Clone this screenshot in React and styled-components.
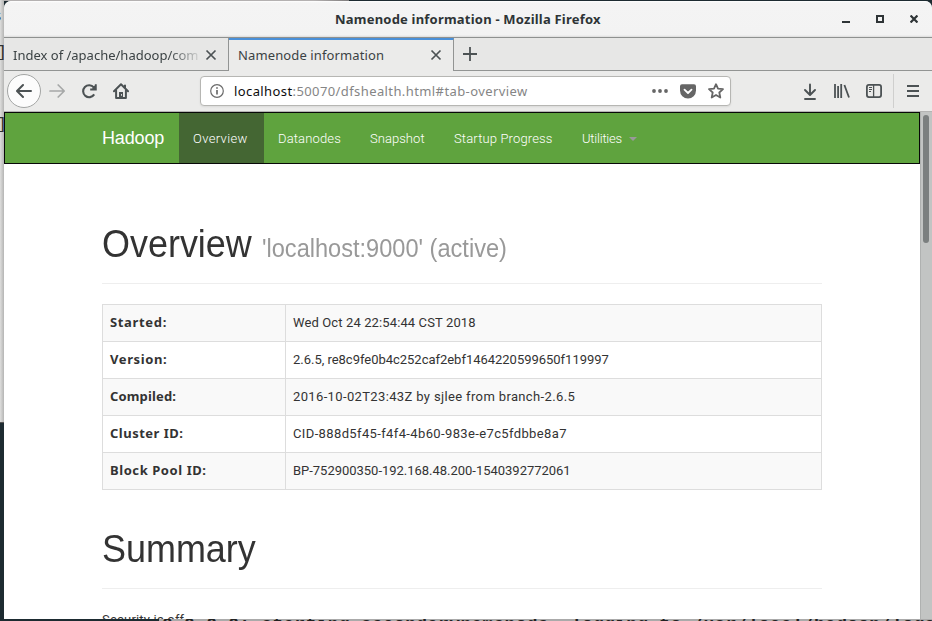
import React from "react";
import styled, { createGlobalStyle } from "styled-components";

const Global = createGlobalStyle`
  *, *::before, *::after { box-sizing: border-box; }
  html, body { margin: 0; padding: 0; overflow: hidden; background: #1d2b31; }
  svg { display: block; flex: none; }
`;

const Desktop = styled.div`
  position: relative;
  width: 932px;
  height: 621px;
  overflow: hidden;
  background: #1d2b31;
`;
const TerminalTop = styled.div`
  position: absolute;
  left: 0;
  top: 0;
  width: 349px;
  height: 1px;
  background: linear-gradient(90deg, #b4b1b1 90%, #7f7c7c);
`;
const TerminalSide = styled.div`
  position: absolute;
  left: 0;
  top: 0;
  width: 4px;
  height: 423px;
  overflow: hidden;
  background: linear-gradient(90deg, #dededd, #b5b5b4);
  border-bottom: 1px solid #555;
`;
const SideGlyph = styled.span`
  position: absolute;
  right: ${(p) => p.$right}px;
  top: ${(p) => p.$top}px;
  font: 17px/20px "Liberation Mono", monospace;
  color: #333;
`;
const TerminalLine = styled.div`
  position: absolute;
  left: 159px;
  top: 619px;
  width: 773px;
  height: 2px;
  overflow: hidden;
  background: #aaa;
`;
const TerminalText = styled.div`
  margin-top: -4px;
  padding-left: 3px;
  white-space: pre;
  font: bold 18px/20px "Liberation Mono", monospace;
  letter-spacing: 0.25px;
  color: #222;
`;

const Window = styled.div`
  position: relative;
  display: flex;
  flex-direction: column;
  width: 928px;
  height: 618px;
  margin: 1px 0 0 4px;
  overflow: hidden;
  border-radius: 7px 7px 0 0;
  background: #ebebea;
`;
const TitleBar = styled.div`
  display: flex;
  align-items: center;
  flex: none;
  height: 37px;
  background: linear-gradient(#fff 0, #f4f4f4 2px, #f3f3f3 34px, #dcdcdb 36px);
  border-bottom: 1px solid #8f9190;
`;
const WindowTitle = styled.div`
  flex: none;
  width: 838px;
  padding-left: 331px;
  font: bold 13px/20px "Noto Sans", sans-serif;
  letter-spacing: 0.21px;
  color: #2e3436;
  white-space: nowrap;
`;
const WindowButtons = styled.div`
  display: flex;
  align-items: center;
  gap: 26px;
`;

const TabStrip = styled.div`
  display: flex;
  flex: none;
  height: 33px;
  background: #e7e7e6;
`;
const Tab = styled.div`
  display: flex;
  align-items: center;
  width: ${(p) => p.$width}px;
  padding: ${(p) => (p.$active ? "0 0 1px 9px" : "1px 0 0 9px")};
  border-right: 1px solid #929493;
  border-top: ${(p) => (p.$active ? "2px solid #4a90d9" : "0")};
  border-bottom: ${(p) => (p.$active ? "0" : "1px solid #929493")};
  background: ${(p) => (p.$active ? "#ebebea" : "#e7e7e6")};
`;
const TabTitle = styled.div`
  width: ${(p) => p.$width}px;
  overflow: hidden;
  font: 13px/20px "Noto Sans", sans-serif;
  letter-spacing: ${(p) => p.$ls || 0}px;
  color: #3b4244;
  white-space: nowrap;
  ${(p) => p.$fade && "mask-image: linear-gradient(90deg, #000 81%, transparent 99%);"}
`;
const TabRest = styled.div`
  display: flex;
  align-items: center;
  flex: 1;
  padding-left: 9px;
  border-bottom: 1px solid #929493;
`;

const Toolbar = styled.div`
  display: flex;
  align-items: center;
  flex: none;
  height: 40px;
  padding-left: 3px;
`;
const BackButton = styled.div`
  display: flex;
  align-items: center;
  justify-content: center;
  width: 34px;
  height: 34px;
  border: 1px solid #a3a5a4;
  border-radius: 50%;
  background: #fcfcfc;
`;
const NavIcons = styled.div`
  display: flex;
  align-items: center;
  gap: 16px;
  width: 159px;
  padding-left: 8px;
`;
const UrlBar = styled.div`
  display: flex;
  align-items: center;
  width: 531px;
  height: 30px;
  padding: 0 6px 0 9px;
  border: 1px solid #b6b6b3;
  border-radius: 4px;
  background: #fff;
  box-shadow: 0 1px 2px rgba(0, 0, 0, 0.08);
`;
const UrlText = styled.div`
  flex: 1;
  padding-left: 10px;
  font: 13px/20px "Noto Sans", sans-serif;
  letter-spacing: 0.4px;
  color: #858585;
  white-space: nowrap;
`;
const UrlHost = styled.span`
  color: #0c0c0d;
  letter-spacing: 0.4px;
`;
const UrlActions = styled.div`
  display: flex;
  align-items: center;
  gap: 12px;
`;
const ToolIcons = styled.div`
  display: flex;
  align-items: center;
  gap: 16px;
  width: 162px;
  padding-left: 73px;
`;
const MenuSlot = styled.div`
  display: flex;
  align-items: center;
  height: 34px;
  padding-left: 13px;
  border-left: 1px solid #cfcfce;
`;

const Viewport = styled.div`
  display: flex;
  flex: 1;
  min-height: 0;
  border-top: 1px solid #b4b4b3;
`;
const Page = styled.main`
  flex: none;
  width: 916px;
  overflow: hidden;
  background: #fff;
  color: #333;
`;
const Scrollbar = styled.div`
  flex: none;
  width: 12px;
  padding: 3px 0 0 2px;
  border-left: 1px solid #afb1b0;
  background: #c2c4c3;
`;
const ScrollThumb = styled.div`
  width: 6px;
  height: 128px;
  border-radius: 3px;
  background: #7b7f7f;
`;

const Navbar = styled.nav`
  display: flex;
  height: 52px;
  padding-left: 97px;
  border: 1px solid #080808;
  background: #5fa33e;
`;
const Brand = styled.div`
  width: 77px;
  font: 18px/51px "Liberation Sans", sans-serif;
  letter-spacing: -0.15px;
  color: #fff;
`;
const NavItem = styled.div`
  display: flex;
  align-items: center;
  width: ${(p) => p.$width}px;
  padding: 2px 0 0 14px;
  font: 300 13px/20px Roboto, sans-serif;
  letter-spacing: ${(p) => p.$ls}px;
  white-space: nowrap;
  color: #fff;
  background: ${(p) => (p.$active ? "#446633" : "transparent")};
`;
const Caret = styled.i`
  margin-left: 7px;
  border: 4px solid transparent;
  border-top-color: #999;
  border-bottom: 0;
`;

const Content = styled.div`
  width: 720px;
  margin-left: 98px;
`;
const Header = styled.header`
  display: flex;
  align-items: baseline;
  height: ${(p) => p.$height}px;
  padding-top: ${(p) => p.$top}px;
  margin-bottom: 20px;
  border-bottom: 1px solid #eee;
`;
const Heading = styled.h1`
  width: 160px;
  margin: 0;
  font: 38px/44px "Liberation Sans", sans-serif;
  transform: scaleX(0.946);
  transform-origin: left;
`;
const SubHeading = styled.small`
  font: 25px/30px "Liberation Sans", sans-serif;
  transform: scaleX(0.943);
  transform-origin: left;
  color: #999;
  white-space: nowrap;
`;
const Table = styled.table`
  width: 720px;
  border-collapse: collapse;
  table-layout: fixed;
`;
const Row = styled.tr`
  height: 37px;
  &:nth-child(odd) { background: #f9f9f9; }
`;
const LabelCell = styled.th`
  width: 183px;
  padding: 0 7px 2px;
  border: 1px solid #ddd;
  text-align: left;
  font: bold 13px/20px "Noto Sans", sans-serif;
  letter-spacing: ${(p) => p.$ls}px;
`;
const ValueCell = styled.td`
  padding: 0 7px;
  border: 1px solid #ddd;
  font: 13px/20px Roboto, sans-serif;
  letter-spacing: ${(p) => p.$ls}px;
`;
const Note = styled.p`
  margin: 0;
  font: 13px/22px Roboto, sans-serif;
  letter-spacing: 0.2px;
`;

const Cross = () => (
  <svg width="12" height="12" viewBox="0 0 12 12" stroke="#4c5254" strokeWidth="1.7" fill="none">
    <path d="M1.5 1.5l9 9M10.5 1.5l-9 9" />
  </svg>
);
const Minimize = () => (
  <svg width="8" height="8" viewBox="0 0 8 8"><path d="M0 6h8v2H0z" fill="#2e3436" /></svg>
);
const Maximize = () => (
  <svg width="8" height="8" viewBox="0 0 8 8"><path d="M1 1h6v6H1z" fill="none" stroke="#2e3436" strokeWidth="2" /></svg>
);
const CloseWindow = () => (
  <svg width="8" height="8" viewBox="0 0 8 8"><path d="M.6.5l6.8 7M7.4.5l-6.8 7" stroke="#2e3436" strokeWidth="2.1" /></svg>
);
const Plus = () => (
  <svg width="14" height="14" viewBox="0 0 14 14"><path d="M7 0v14M0 7h14" stroke="#4c5254" strokeWidth="1.8" /></svg>
);
const Arrow = ({ flip, color }) => (
  <svg width="16" height="16" viewBox="0 0 16 16" fill="none" stroke={color} strokeWidth={flip ? 1.7 : 2} strokeLinecap="round" strokeLinejoin="round">
    {flip ? <path d="M1 8h14M9.2 2l6 6-6 6" /> : <path d="M15 8H1.2M7 2L1 8l6 6" />}
  </svg>
);
const Reload = () => (
  <svg width="16" height="16" viewBox="0 0 16 16" fill="none" stroke="#4c5254" strokeWidth="2.1">
    <path d="M13.2 11.4A6 6 0 1 1 12.8 4.4" />
    <path d="M14.8 1.2v5.3H9.2" strokeWidth="1.9" />
    <path d="M12 3.8l2.8-2v4.7H11z" fill="#4c5254" stroke="none" />
  </svg>
);
const Home = () => (
  <svg width="16" height="16" viewBox="0 0 16 16" fill="none" stroke="#4c5254" strokeWidth="2" strokeLinejoin="round" strokeLinecap="round">
    <path d="M1 8.3L8 1.2l7 7.1M12 2.5v2.5" />
    <path d="M3.1 7.5V15h9.8V7.5" />
    <path d="M6 14.5V9h4v5.5z" fill="#4c5254" stroke="none" />
    <path d="M8.5 11.5v.8" stroke="#ebebea" strokeWidth="1" />
  </svg>
);
const Info = () => (
  <svg width="14" height="14" viewBox="0 0 14 14" fill="none" stroke="#6b6b6b">
    <circle cx="7" cy="7" r="6.3" strokeWidth="1.2" />
    <path d="M7 6v4.5M7 3.2v1.6" strokeWidth="1.7" />
  </svg>
);
const Dots = () => (
  <svg width="16" height="4" viewBox="0 0 16 4" fill="#666"><circle cx="2" cy="2" r="1.9" /><circle cx="8" cy="2" r="1.9" /><circle cx="14" cy="2" r="1.9" /></svg>
);
const Pocket = () => (
  <svg width="16" height="15" viewBox="0 0 16 15">
    <path d="M2 .3h12a2 2 0 0 1 2 2v4.3a8 8 0 0 1-16 0V2.3a2 2 0 0 1 2-2z" fill="#666" />
    <path d="M4.5 5.6L8 9l3.5-3.4" fill="none" stroke="#fff" strokeWidth="1.8" strokeLinecap="round" strokeLinejoin="round" />
  </svg>
);
const Star = () => (
  <svg width="16" height="16" viewBox="0 0 16 16" fill="none" stroke="#666" strokeWidth="1.8" strokeLinejoin="round">
    <path d="M8 1.2l2 4.5 5 .5-3.7 3.3 1 5L8 12l-4.3 2.5 1-5L1 6.2l5-.5z" />
  </svg>
);
const Download = () => (
  <svg width="12" height="17" viewBox="0 0 12 17" fill="none" stroke="#4c5254" strokeWidth="1.9" strokeLinecap="round" strokeLinejoin="round">
    <path d="M6 1.4v10.2M1 7l5 5 5-5M1 16h10" />
  </svg>
);
const Library = () => (
  <svg width="18" height="14" viewBox="-2 0 18 14" fill="none" stroke="#4c5254" strokeWidth="1.8">
    <path d="M1 0v14M4.1 2v12M7.2 0v14M10.4 1L15 13.5" />
  </svg>
);
const Sidebar = () => (
  <svg width="16" height="14" viewBox="0 0 16 14" fill="none" stroke="#4c5254" strokeWidth="1.8">
    <rect x=".9" y=".9" width="14.2" height="12.2" rx="2" />
    <path d="M7.6 1v12" strokeWidth="1.3" />
    <path d="M3 3.5h3M3 5.5h3M3 7.5h2" strokeWidth="1" />
  </svg>
);
const Menu = () => (
  <svg width="12" height="12" viewBox="0 0 12 12"><path d="M0 1h12M0 6h12M0 11h12" stroke="#4c5254" strokeWidth="1.9" /></svg>
);

const navItems = [
  { text: "Overview", width: 85, ls: 0.35, active: true },
  { text: "Datanodes", width: 92, ls: 0.15 },
  { text: "Snapshot", width: 84, ls: 0.05 },
  { text: "Startup Progress", width: 128, ls: 0.15 },
  { text: "Utilities", width: 80, ls: -0.22, caret: true },
];
const rows = [
  ["Started:", 0.66, "Wed Oct 24 22:54:44 CST 2018", 0.12],
  ["Version:", 0.6, "2.6.5, re8c9fe0b4c252caf2ebf1464220599650f119997", -0.02],
  ["Compiled:", 0.15, "2016-10-02T23:43Z by sjlee from branch-2.6.5", 0.36],
  ["Cluster ID:", 0.5, "CID-888d5f45-f4f4-4b60-983e-e7c5fdbbe8a7", 0.37],
  ["Block Pool ID:", 0.57, "BP-752900350-192.168.48.200-1540392772061", -0.02],
];

export default function App() {
  return (
    <Desktop>
      <Global />
      <TerminalTop />
      <TerminalSide>
        <SideGlyph $top={7} $right={2}>s</SideGlyph>
        <SideGlyph $top={43} $right={-3}>]</SideGlyph>
        <SideGlyph $top={115} $right={-3}>]</SideGlyph>
      </TerminalSide>
      <Window>
        <TitleBar>
          <WindowTitle>Namenode information - Mozilla Firefox</WindowTitle>
          <WindowButtons>
            <Minimize />
            <Maximize />
            <CloseWindow />
          </WindowButtons>
        </TitleBar>
        <TabStrip>
          <Tab $width={225}>
            <TabTitle $width={192} $fade>Index of /apache/hadoop/com</TabTitle>
            <Cross />
          </Tab>
          <Tab $width={225} $active>
            <TabTitle $width={192} $ls={0.12}>Namenode information</TabTitle>
            <Cross />
          </Tab>
          <TabRest><Plus /></TabRest>
        </TabStrip>
        <Toolbar>
          <BackButton><Arrow color="#4c5254" /></BackButton>
          <NavIcons>
            <Arrow flip color="#a6a8a8" />
            <Reload />
            <Home />
          </NavIcons>
          <UrlBar>
            <Info />
            <UrlText><UrlHost>localhost</UrlHost>:50070/dfshealth.html#tab-overview</UrlText>
            <UrlActions><Dots /><Pocket /><Star /></UrlActions>
          </UrlBar>
          <ToolIcons><Download /><Library /><Sidebar /></ToolIcons>
          <MenuSlot><Menu /></MenuSlot>
        </Toolbar>
        <Viewport>
          <Page>
            <Navbar>
              <Brand>Hadoop</Brand>
              {navItems.map((n) => (
                <NavItem key={n.text} $width={n.width} $ls={n.ls} $active={n.active}>
                  {n.text}
                  {n.caret && <Caret />}
                </NavItem>
              ))}
            </Navbar>
            <Content>
              <Header $height={120} $top={58}>
                <Heading>Overview</Heading>
                <SubHeading>'localhost:9000' (active)</SubHeading>
              </Header>
              <Table>
                <tbody>
                  {rows.map(([label, labelLs, value, valueLs]) => (
                    <Row key={label}>
                      <LabelCell $ls={labelLs}>{label}</LabelCell>
                      <ValueCell $ls={valueLs}>{value}</ValueCell>
                    </Row>
                  ))}
                </tbody>
              </Table>
              <Header $height={99} $top={37}>
                <Heading>Summary</Heading>
              </Header>
              <Note>Security is off.</Note>
            </Content>
          </Page>
          <Scrollbar><ScrollThumb /></Scrollbar>
        </Viewport>
      </Window>
      <TerminalLine>
        <TerminalText>0.0.0.0: starting secondarynamenode, logging to /usr/local/hadoop/logs</TerminalText>
      </TerminalLine>
    </Desktop>
  );
}
